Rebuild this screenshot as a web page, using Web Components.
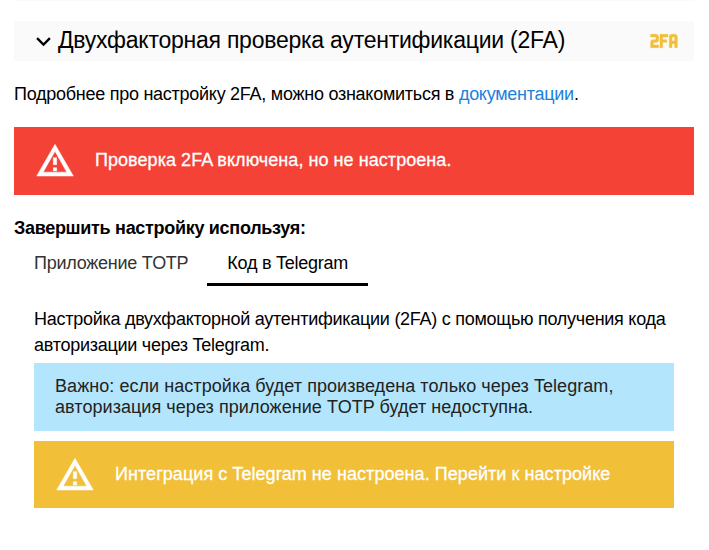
<!DOCTYPE html>
<html lang="ru">
<head>
<meta charset="utf-8">
<title>2FA</title>
<style>
  body {
    margin: 0;
    background: #fff;
    color: #000;
    font: 18px/26px "Liberation Sans", Arial, sans-serif;
    letter-spacing: -.265px;
  }
</style>
</head>
<body>
<two-factor-page></two-factor-page>

<script>
(function () {
  const icons = {
    chevron: 'M7.41 8.58L12 13.17l4.59-4.59L18 10l-6 6-6-6z',
    warning: 'M12 6.2L19.1 18.7H4.9L12 6.2M12 2L1 21h22L12 2zm1 14h-2v2h2v-2zm0-6h-2v4.2h2v-4.2z',
    twofa: 'M2 7v2h4v2H4a2 2 0 0 0-2 2v4h6v-2H4v-2h2a2 2 0 0 0 2-2V9c0-1.11-.9-2-2-2H2m7 0v10h2v-4h3v-2h-3V9h4V7H9m9 0a2 2 0 0 0-2 2v8h2v-3h2v3h2V9a2 2 0 0 0-2-2h-2m0 2h2v3h-2V9z'
  };

  class BaseElement extends HTMLElement {
    connectedCallback() {
      if (!this.shadowRoot) this.attachShadow({mode: 'open'});
      this.shadowRoot.innerHTML = this.template();
    }
  }

  class UiIcon extends BaseElement {
    template() {
      const size = this.getAttribute('size') || '24';
      const strokeW = this.getAttribute('stroke') || '0';
      return `
        <style>
          :host { display: block; flex: none; line-height: 0; }
          svg { display: block; }
        </style>
        <svg width="${size}" height="${size}" viewBox="0 0 24 24" aria-hidden="true">
          <path d="${icons[this.getAttribute('name')]}" fill="currentColor" fill-rule="evenodd"
                stroke="currentColor" stroke-width="${strokeW}" />
        </svg>`;
    }
  }

  class UiPanelHeader extends BaseElement {
    template() {
      return `
        <style>
          :host {
            display: flex; align-items: center; box-sizing: border-box;
            height: 40px; padding: 0 14px 0 15px; background: #fafafa;
          }
          .title {
            flex: 1; height: 40px; font-size: 23px; line-height: 38px;
            letter-spacing: -.24px; white-space: nowrap;
          }
          .badge { color: #f1bf38; }
        </style>
        <ui-icon name="chevron" size="29"></ui-icon>
        <div class="title"><slot></slot></div>
        <ui-icon class="badge" name="twofa" size="32" stroke=".35"></ui-icon>`;
    }
  }

  class UiAlert extends BaseElement {
    template() {
      return `
        <style>
          :host {
            display: flex; align-items: center; gap: 20px; box-sizing: border-box;
            height: 68px; padding: 0 21px; color: #fff; background: #f44336;
            line-height: 21px; letter-spacing: .055px; white-space: nowrap;
            -webkit-text-stroke: .3px currentColor;
          }
          .text { padding-bottom: 1px; }
          :host([type=warning]) { background: #f1bf38; height: 67px; }
          :host([type=info]) {
            background: #b3e5fc; color: #222;
            -webkit-text-stroke: 0;
          }
        </style>
        ${this.getAttribute('type') === 'info' ? '' : '<ui-icon name="warning" size="40" stroke=".3"></ui-icon>'}
        <div class="text"><slot></slot></div>`;
    }
  }

  class UiTab extends BaseElement {
    template() {
      return `
        <style>
          :host {
            display: block; box-sizing: border-box; height: 45px; padding: 9px 20px 0;
            border-bottom: 3px solid transparent; color: #333;
            letter-spacing: -.26px; white-space: nowrap;
          }
          :host([active]) { margin-left: -1px; color: #000; border-color: #000; }
        </style>
        <slot></slot>`;
    }
  }

  class UiTabs extends BaseElement {
    template() {
      return `
        <style>:host { display: flex; }</style>
        <slot></slot>`;
    }
  }

  class TwoFactorPage extends BaseElement {
    template() {
      return `
        <style>
          :host { display: block; padding: 0 15px 0 14px; }
          .prev { height: 1px; margin-bottom: 20px; background: #fafafa; }
          p { margin: 0; white-space: nowrap; }
          a { color: #1e7fdc; text-decoration: none; }
          .docs { margin: 20px 0; }
          .finish { display: block; margin-top: 20px; letter-spacing: -.3px; }
          .content { padding: 20px 20px 0; }
          .content ui-alert { margin-bottom: 10px; }
          .intro { margin-bottom: 5px; }
        </style>
        <div class="prev"></div>
        <ui-panel-header>Двухфакторная проверка аутентификации (2FA)</ui-panel-header>
        <p class="docs">Подробнее про настройку 2FA, можно ознакомиться в <a href="#">документации</a>.</p>
        <ui-alert>Проверка 2FA включена, но не настроена.</ui-alert>
        <b class="finish">Завершить настройку используя:</b>
        <ui-tabs>
          <ui-tab>Приложение TOTP</ui-tab>
          <ui-tab active>Код в Telegram</ui-tab>
        </ui-tabs>
        <div class="content">
          <p class="intro">Настройка двухфакторной аутентификации (2FA) с помощью получения кода<br>авторизации через Telegram.</p>
          <ui-alert type="info">Важно: если настройка будет произведена только через Telegram,<br>авторизация через приложение TOTP будет недоступна.</ui-alert>
          <ui-alert type="warning">Интеграция с Telegram не настроена. Перейти к настройке</ui-alert>
        </div>`;
    }
  }

  customElements.define('ui-icon', UiIcon);
  customElements.define('ui-panel-header', UiPanelHeader);
  customElements.define('ui-alert', UiAlert);
  customElements.define('ui-tab', UiTab);
  customElements.define('ui-tabs', UiTabs);
  customElements.define('two-factor-page', TwoFactorPage);
})();
</script>
</body>
</html>
